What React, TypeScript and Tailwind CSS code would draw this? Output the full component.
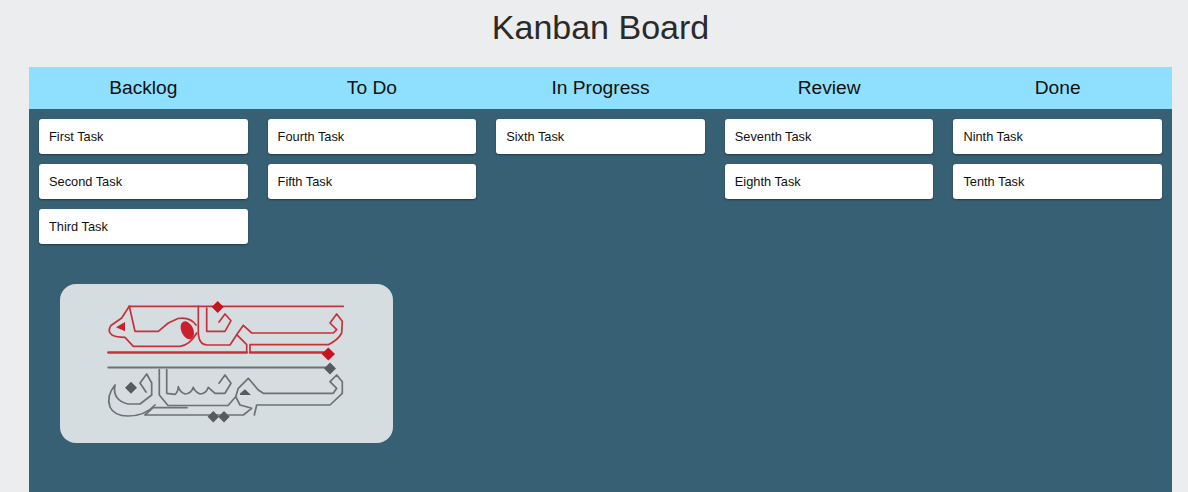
const COLUMNS = [
  { title: 'Backlog', tasks: ['First Task', 'Second Task', 'Third Task'] },
  { title: 'To Do', tasks: ['Fourth Task', 'Fifth Task'] },
  { title: 'In Progress', tasks: ['Sixth Task'] },
  { title: 'Review', tasks: ['Seventh Task', 'Eighth Task'] },
  { title: 'Done', tasks: ['Ninth Task', 'Tenth Task'] },
];

function Logo() {
  return (
    <svg viewBox="60 284 333 159" width="333" height="159" className="ml-[21px] mt-[30px] block max-w-none blur-[0.4px]" fill="none" strokeLinejoin="round" strokeLinecap="round">
      <rect x="60" y="284" width="333" height="159" rx="16" fill="#d6dde1" />
      {/* red word */}
      <g stroke="#c4333d" strokeWidth="1.7">
        <path d="M129,306.3 H343.3" />
        <path d="M108.3,352.5 H246.7 M250,352.5 H325" strokeWidth="2.4" />
        <path d="M129.3,306.3 L121.7,318 L111,325.5 Q107,331 112,335 Q116,337.3 125,337.3 L133.3,346.3 H180 Q190,345 196.7,333" />
        <path d="M129.3,306.3 L135,331.3 H158.3 L168.3,323 L178,318.5 Q190,316.5 196,325" />
        <path d="M198.3,306.3 V333 Q199,345 207,345 H230 L236.7,334.7" />
        <path d="M206.7,308 V331.3 H225 L231,320.7 L225,314 L219,322" />
        <path d="M243.3,325.3 L236.7,334.7 L246.7,344.7 V352.5 M250,352.5 V344.7 H328.3 Q338,340 341.7,333 L342.3,321.3 L336.7,314 L330,323 L336.7,329.7 L333.3,333 H251.7 L243.3,325.3" />
      </g>
      <path d="M116,327.3 L125,322 V331.3 Z" fill="#c8202c" />
      <ellipse cx="187.3" cy="330.3" rx="6" ry="9.5" transform="rotate(-25 187.3 330.3)" fill="#c8202c" />
      <path d="M217.7,301 L223.7,307 L217.7,313 L211.7,307 Z M328.3,347.5 L335,354 L328.3,360.5 L321.7,354 Z" fill="#c8141e" />
      {/* gray word */}
      <g stroke="#6b7175" strokeWidth="1.7">
        <path d="M108.3,367.5 H326" strokeWidth="2" />
        <path d="M115,385 Q106,396 110,407 Q114,416 128,416 Q145,416 155,405 M115,385 Q112,400 128,404 H140 L151.7,395 V383 L146.7,374 L140,383 L146,392" />
        <path d="M166.7,369.5 V393.3 L175,394.3 Q178,392 178.3,386.7 Q180,392 185,394 Q191,394 193.3,387.3 Q195,392 200,394 Q206,394 208.3,387.3 L215,393.3 H225 L231,383.3 L225,375 L219,383.3" />
        <path d="M159.3,369.5 V395 L168,405.5 H228 L235.7,396.7" />
        <path d="M145,415 L153,407.7 H187 M145,415 H243.3 L251.7,408.3 L240,405 L235.7,396.7 L238.3,388.3 L248.3,378.3 L258.3,390 L263.3,393.3 H333.3 L336.7,388.3 L330,381.7 L336.7,375 L342.3,381.7 V393.3 L330,405 H256.7 L254.3,415" />
      </g>
      <path d="M240,393.5 L245,389.3 L251,395 H240 Z" fill="#565c60" />
      <path d="M330,362.5 L336,368.5 L330,374.5 L324,368.5 Z M131,381.7 L137,387.7 L131,393.7 L125,387.7 Z M213.3,411 L219,416.7 L213.3,422.4 L207.6,416.7 Z M224,411 L229.7,416.7 L224,422.4 L218.3,416.7 Z" fill="#555b5f" />
    </svg>
  );
}

export default function App() {
  return (
    <div className="flex h-screen flex-col overflow-hidden bg-[#ecedef] pl-[29px] pr-4 font-['Liberation_Sans',sans-serif] text-[#222]">
      <h1 className="h-[67px] pt-[7px] text-center text-[34px] leading-[40px] font-normal text-[#2a2a2a]">Kanban Board</h1>
      <div className="grid grid-cols-5 bg-[#8fe0ff]">
        {COLUMNS.map((col) => (
          <div key={col.title} className="h-[42px] text-center text-[19.2px] leading-[42px] text-[#111]">
            {col.title}
          </div>
        ))}
      </div>
      <div className="grid flex-1 grid-cols-5 bg-[#386074]">
        {COLUMNS.map((col, i) => (
          <div key={col.title} className="flex min-w-0 flex-col gap-[10px] p-[10px]">
            {col.tasks.map((task) => (
              <div key={task} className="h-[35px] rounded-[3px] bg-white px-[10px] text-[12.8px] leading-[35px] text-[#111] shadow-[0_1px_2px_rgba(0,0,0,0.4)]">
                {task}
              </div>
            ))}
            {i === 0 && <Logo />}
          </div>
        ))}
      </div>
    </div>
  );
}
